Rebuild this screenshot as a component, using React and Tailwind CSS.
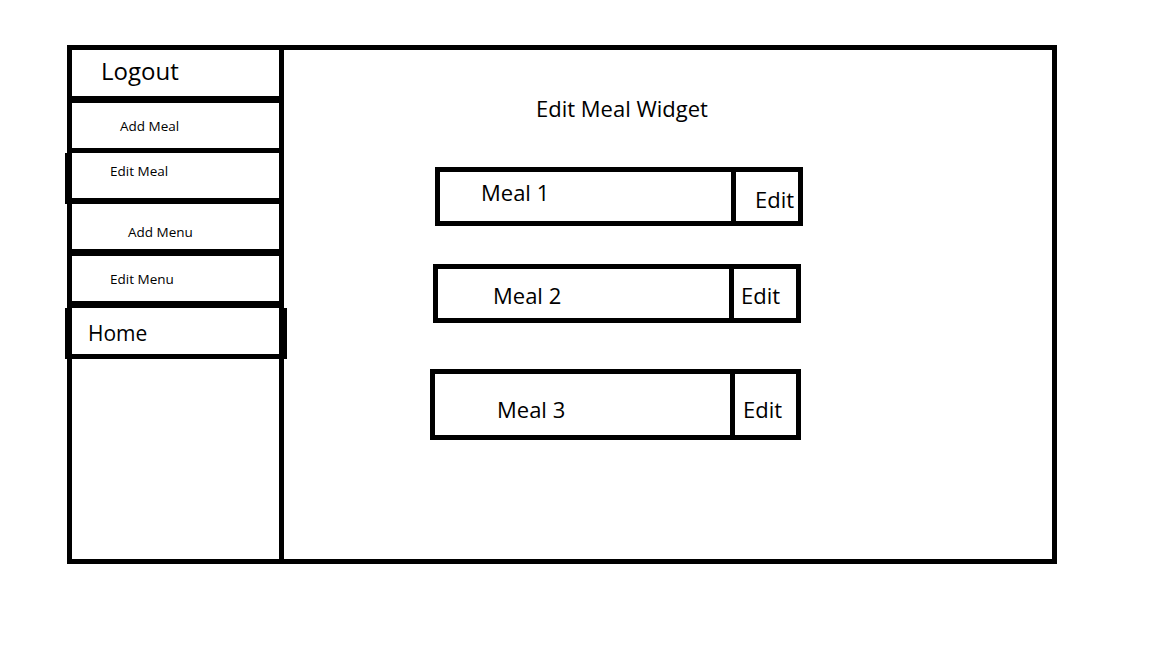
const menu = [
  { label: 'Logout', box: 'h-[53px] border-b-[7px] pl-[29px] pt-[7px] text-[24px] leading-[28px]' },
  { label: 'Add Meal', box: 'h-[50px] border-b-[5px] pl-[48px] pt-[14px] text-[13.5px] leading-[18px]' },
  { label: 'Edit Meal', box: 'h-[51px] border-b-[6px] -ml-[7px] border-l-[7px] pl-[38px] pt-[9px] text-[13.5px] leading-[18px]' },
  { label: 'Add Menu', box: 'h-[52px] border-b-[7px] pl-[56px] pt-[19px] text-[13.5px] leading-[18px]' },
  { label: 'Edit Menu', box: 'h-[52px] border-b-[7px] pl-[38px] pt-[14px] text-[13.5px] leading-[18px]' },
  { label: 'Home', box: 'h-[51px] border-b-[5px] -ml-[7px] -mr-[8px] border-l-[7px] border-r-[8px] pl-[16px] pt-[11px] text-[21px] leading-[28px]' },
];

const meals = [
  { name: 'Meal 1', row: 'mt-[45px] ml-[151px] h-[59px] w-[368px]', namePad: 'pl-[41px] pt-[6px]', editPad: 'pl-[19px] pt-[13px]', editW: 'w-[72px]' },
  { name: 'Meal 2', row: 'mt-[38px] ml-[149px] h-[59px] w-[368px]', namePad: 'pl-[55px] pt-[12px]', editPad: 'pl-[7px] pt-[12px]', editW: 'w-[72px]' },
  { name: 'Meal 3', row: 'mt-[46px] ml-[146px] h-[71px] w-[371px]', namePad: 'pl-[62px] pt-[21px]', editPad: 'pl-[8px] pt-[21px]', editW: 'w-[71px]' },
];

export default function App() {
  return (
    <div className="min-h-screen w-full bg-white pt-[45px] text-black font-['Open_Sans',sans-serif]">
      <div className="ml-[67px] flex h-[519px] w-[990px] border-[5px] border-black">
        {/* Sidebar */}
        <div className="flex w-[212px] shrink-0 flex-col border-r-[5px] border-black">
          {menu.map((item) => (
            <div key={item.label} className={`shrink-0 border-black ${item.box}`}>
              {item.label}
            </div>
          ))}
        </div>

        {/* Main */}
        <div className="flex flex-1 flex-col">
          <h1 className="ml-[252px] mt-[44px] h-[28px] text-[22px] leading-[28px] font-normal">Edit Meal Widget</h1>
          {meals.map((meal) => (
            <div key={meal.name} className={`flex border-[5px] border-r-0 border-black ${meal.row}`}>
              <div className={`flex-1 text-[22px] leading-[28px] ${meal.namePad}`}>{meal.name}</div>
              <div className={`-my-[5px] ${meal.editW} border-[5px] border-black text-[22px] leading-[28px] ${meal.editPad}`}>
                Edit
              </div>
            </div>
          ))}
        </div>
      </div>
    </div>
  );
}
